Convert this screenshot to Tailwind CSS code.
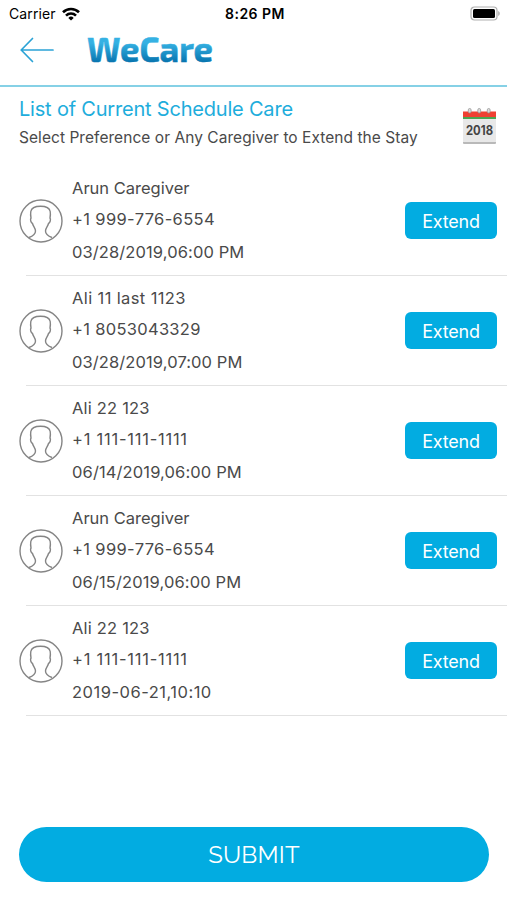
<!DOCTYPE html>
<html lang="en">

<head>
    <meta charset="UTF-8">
    <meta name="viewport" content="width=device-width, initial-scale=1.0">
    <script src="https://cdn.jsdelivr.net/npm/@tailwindcss/browser@4"></script>
    <title>WeCare</title>
</head>

<body class="bg-white">
    <div class="flex flex-col w-[507px] h-[900px] overflow-hidden bg-white font-['Inter',sans-serif] text-[#4a4a4a]">
        <!-- status bar -->
        <div class="grid grid-cols-3 items-center h-[27px] pl-[9px] pr-[6px] text-[14px] text-black">
            <div class="flex items-center gap-[6px]">
                <span class="tracking-[0.12px]">Carrier</span>
                <svg class="w-[18px] h-[14px]" viewBox="0 0 18 14" fill="none" stroke="#000" stroke-width="2.6">
                    <path d="M1 5.3a11.4 11.4 0 0 1 16 0" />
                    <path d="M4 8.6a7.1 7.1 0 0 1 10 0" />
                    <path d="M9 13.6L6.3 10.9a3.8 3.8 0 0 1 5.4 0z" fill="#000" stroke="none" />
                </svg>
            </div>
            <span class="text-center font-semibold tracking-[0.5px]">8:26 PM</span>
            <svg class="justify-self-end w-[31px] h-[15px]" viewBox="0 0 31 15">
                <rect x="1" y="1" width="26" height="13" rx="3.5" fill="#fff" stroke="#b0b0b0" stroke-width="1.2" />
                <rect x="3" y="3" width="22" height="9" rx="1.5" fill="#000" />
                <path d="M28.3 5v5c1.8-.8 1.8-4.2 0-5z" fill="#a0a0a0" />
            </svg>
        </div>

        <!-- header -->
        <div class="flex items-center h-[60px] pl-5 pb-[13px] border-b-2 border-[#86d1e6]">
            <svg class="w-[34px] h-[26px]" viewBox="0 0 34 26" fill="none" stroke="#2ba3d6" stroke-width="1.7" stroke-linecap="round" stroke-linejoin="round">
                <path d="M33 13H1.2M12.5 1.5L1.2 13l11.3 11.5" />
            </svg>
            <svg class="ml-[32px] w-[132px] h-[46px]" viewBox="0 0 132 46">
                <defs>
                    <linearGradient id="logo" gradientUnits="userSpaceOnUse" x1="0" y1="11" x2="0" y2="36">
                        <stop offset=".2" stop-color="#35b1e3" />
                        <stop offset="1" stop-color="#0672ad" />
                    </linearGradient>
                </defs>
                <text x="1" y="35" textLength="126" lengthAdjust="spacingAndGlyphs" font-family="'Exo 2', Exo, Inter, sans-serif" font-size="35" font-weight="700" fill="url(#logo)" stroke="url(#logo)" stroke-width=".5">WeCare</text>
            </svg>
        </div>

        <div class="flex justify-between h-[79px] pl-[19px] pr-[10px]">
            <div class="pt-[9px]">
                <h1 class="text-[20px] leading-[27px] tracking-[-0.2px] text-[#1eaddc]">List of Current Schedule Care</h1>
                <p class="text-[15.5px] leading-[29px] tracking-[0.05px]">Select Preference or Any Caregiver to Extend the Stay</p>
            </div>
            <svg class="mt-[20px] w-[35px] h-[38px] overflow-visible" viewBox="0 0 35 38">
                <rect x="1" y="5" width="33" height="32" rx="1" fill="#b9b9b9" />
                <rect x="1" y="5" width="33" height="30" fill="#e8e8e8" />
                <rect x="1" y="4.5" width="33" height="5.5" fill="#ef4032" />
                <rect x="1" y="10" width="33" height="2" fill="#4ba653" />
                <g fill="#ddd" stroke="#999" stroke-width=".8">
                    <rect x="6.3" y="1.5" width="2.8" height="4.5" rx="1.4" />
                    <rect x="15.8" y="1.5" width="2.8" height="4.5" rx="1.4" />
                    <rect x="25.3" y="1.5" width="2.8" height="4.5" rx="1.4" />
                </g>
                <text x="17.5" y="28" text-anchor="middle" textLength="27" lengthAdjust="spacingAndGlyphs" font-family="Inter, sans-serif" font-size="13" font-weight="700" fill="#444">2018</text>
            </svg>
        </div>

        <div id="care-list"></div>

        <div class="mt-auto mb-[18px] pl-[19px] pr-[18px]">
            <button class="w-full h-[55px] rounded-full bg-[#02ace1] text-white text-[24px] tracking-[0.2px] font-['Raleway','Lato',sans-serif]">SUBMIT</button>
        </div>
    </div>
</body>
<script>
    // each field is [text, letter spacing]
    var schedules = [
        { name: ["Arun Caregiver", "tracking-normal"], phone: ["+1 999-776-6554", "tracking-[0.35px]"], time: ["03/28/2019,06:00 PM", "tracking-[0.1px]"] },
        { name: ["Ali 11 last 1123", "tracking-[0.38px]"], phone: ["+1 8053043329", "tracking-[0.3px]"], time: ["03/28/2019,07:00 PM", "tracking-[0.1px]"] },
        { name: ["Ali 22 123", "tracking-[0.2px]"], phone: ["+1 111-111-1111", "tracking-[0.75px]"], time: ["06/14/2019,06:00 PM", "tracking-[0.12px]"] },
        { name: ["Arun Caregiver", "tracking-normal"], phone: ["+1 999-776-6554", "tracking-[0.35px]"], time: ["06/15/2019,06:00 PM", "tracking-[0.12px]"] },
        { name: ["Ali 22 123", "tracking-[0.2px]"], phone: ["+1 111-111-1111", "tracking-[0.75px]"], time: ["2019-06-21,10:10", "tracking-[0.5px]"] }
    ];

    document.getElementById("care-list").innerHTML = schedules.map(item => `
        <div class="pl-[19px]">
            <div class="flex items-center h-[109px] pr-[10px]">
                <svg class="w-[44px] h-[44px]" viewBox="0 0 44 44" fill="none" stroke="#858585" stroke-width="1.4">
                    <circle cx="22" cy="22" r="21" />
                    <path d="M10 38.5c4-1.5 6.500-3.500 6.500-6.500 0-3-2.200-4-3-7.500-1.700-.8-2.500-4-1.500-5.500 0 0-.7-3.500-.2-6.500.6-3.500 4-5.300 9.700-5.300s9.100 1.800 9.700 5.300c.5 3-.2 6.500-.2 6.500 1 1.500.2 4.700-1.500 5.500-.8 3.500-3 4.500-3 7.500 0 3 2.500 5 6.500 6.500" />
                </svg>
                <div class="flex-1 pl-[9px] text-[16.5px]">
                    <p class="leading-[31px] ${item.name[1]}">${item.name[0]}</p>
                    <p class="leading-[31px] ${item.phone[1]}">${item.phone[0]}</p>
                    <p class="leading-[34px] ${item.time[1]}">${item.time[0]}</p>
                </div>
                <button class="pt-px w-[92px] h-[37px] rounded-[6px] bg-[#02ace1] text-white text-[18px] tracking-[-0.2px]">Extend</button>
            </div>
            <div class="ml-[7px] h-px bg-[#e2e2e2]"></div>
        </div>
    `).join("");
</script>

</html>
